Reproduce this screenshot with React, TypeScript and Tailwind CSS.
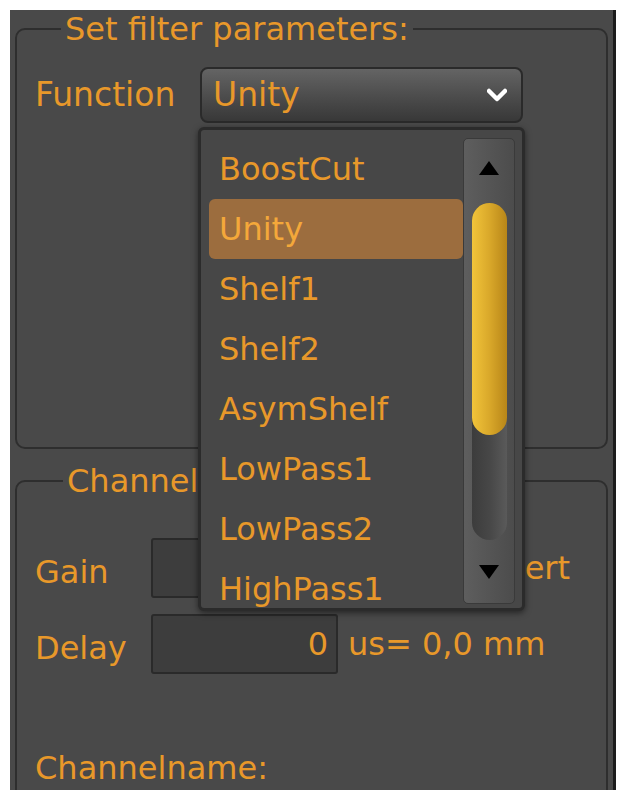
import { useState } from 'react';

const FUNCS = ['BoostCut', 'Unity', 'Shelf1', 'Shelf2', 'AsymShelf', 'LowPass1', 'LowPass2', 'HighPass1'];

const font = { fontFamily: '"DejaVu Sans", "Open Sans", sans-serif' };

export default function App() {
  const [value, setValue] = useState('Unity');

  return (
    <div className="w-[629px] h-[800px] bg-white pt-[10px] pl-[10px] text-[#e8982a]" style={font}>
      <div className="relative w-[606px] h-[780px] bg-[#494949] border-r-[3px] border-[#1c1c1c] overflow-hidden pl-[5px] pr-[5px] pt-[1px]">
        {/* filter parameters group */}
        <fieldset className="border-2 border-[#2e2e2e] rounded-[10px] h-[438px] px-[18px]">
          <legend className="ml-[26px] px-[4px] text-[32px] leading-[36px]">Set filter parameters:</legend>
          <div className="flex items-center mt-[20px]">
            <span className="w-[165px] text-[33px] leading-[36px]">Function</span>
            <div className="relative">
              <button className="flex items-center justify-between w-[323px] h-[56px] rounded-[8px] border-2 border-[#2a2a2a] bg-gradient-to-b from-[#646464] to-[#383838] pl-[11px] pr-[14px] text-[33px] text-[#e8982a]">
                <span>{value}</span>
                <svg width="20" height="14" viewBox="0 0 20 14">
                  <path d="M2 3 L10 11 L18 3" fill="none" stroke="#fff" strokeWidth="4.5" strokeLinejoin="round" strokeLinecap="round" />
                </svg>
              </button>

              {/* open popup */}
              <div className="absolute z-10 left-[-2px] top-[60px] w-[327px] h-[484px] bg-[#474747] border-[3px] border-[#2b2b2b] rounded-[6px] shadow-[0_2px_6px_rgba(0,0,0,0.5)] flex overflow-hidden">
                <div className="flex-1 pl-[8px] pt-[9px]">
                  {FUNCS.map(f => (
                    <div
                      key={f}
                      onClick={() => setValue(f)}
                      className={`h-[60px] flex items-center pl-[10px] rounded-[6px] text-[32px] ${f === value ? 'bg-[#9c6d3e] text-[#f4a83a]' : ''}`}
                    >
                      {f}
                    </div>
                  ))}
                </div>
                <div className="w-[52px] mt-[8px] mb-[4px] mr-[7px] rounded-[5px] bg-gradient-to-r from-[#5e5e5e] to-[#4c4c4c] border border-[#3a3a3a] flex flex-col items-center">
                  <svg width="22" height="16" viewBox="0 0 22 16" className="mt-[21px]">
                    <path d="M11 1 L21 15 L1 15 Z" fill="#000" />
                  </svg>
                  <div className="mt-[27px] w-[35px] h-[337px] rounded-full bg-gradient-to-r from-[#3c3c3c] via-[#474747] to-[#5a5a5a] flex flex-col">
                    <div className="h-[232px] rounded-full bg-gradient-to-r from-[#f2c43a] via-[#d9a82a] to-[#b88618]" />
                  </div>
                  <svg width="22" height="16" viewBox="0 0 22 16" className="mt-[24px]">
                    <path d="M1 1 L21 1 L11 15 Z" fill="#000" />
                  </svg>
                </div>
              </div>
            </div>
          </div>
        </fieldset>

        {/* channel group */}
        <fieldset className="mt-[14px] border-2 border-[#2e2e2e] rounded-[10px] h-[400px] px-[18px]">
          <legend className="ml-[28px] px-[4px] text-[32px] leading-[36px]">Channel 1</legend>
          <div className="flex items-center mt-[39px] h-[60px]">
            <span className="w-[116px] text-[32px] pt-[8px]">Gain</span>
            <div className="w-[187px] h-[60px] bg-[#3d3d3d] border-2 border-[#2a2a2a] rounded-[3px]" />
            <label className="ml-[110px] flex items-center gap-[8px] text-[32px]">
              <span className="w-[20px] h-[20px] border-2 border-[#2a2a2a] bg-[#3d3d3d]" />
              Invert
            </label>
          </div>
          <div className="flex items-center mt-[16px] h-[60px]">
            <span className="w-[116px] text-[32px] pt-[8px]">Delay</span>
            <div className="w-[187px] h-[60px] bg-[#3d3d3d] border-2 border-[#2a2a2a] rounded-[3px] flex items-center justify-end pr-[8px] text-[32px]">0</div>
            <span className="ml-[10px] text-[32px]">us= 0,0 mm</span>
          </div>
          <div className="mt-[70px] text-[32px]">Channelname:</div>
        </fieldset>
      </div>
    </div>
  );
}
